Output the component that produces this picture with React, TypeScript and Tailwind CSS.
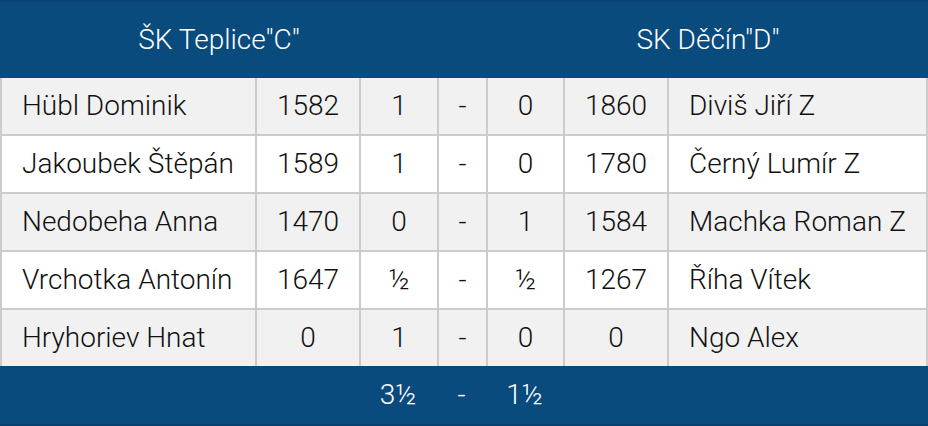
const rows = [
  { home: 'Hübl Dominik', homeElo: '1582', a: '1', b: '0', awayElo: '1860', away: 'Diviš Jiří Z' },
  { home: 'Jakoubek Štěpán', homeElo: '1589', a: '1', b: '0', awayElo: '1780', away: 'Černý Lumír Z' },
  { home: 'Nedobeha Anna', homeElo: '1470', a: '0', b: '1', awayElo: '1584', away: 'Machka Roman Z' },
  { home: 'Vrchotka Antonín', homeElo: '1647', a: '½', b: '½', awayElo: '1267', away: 'Říha Vítek' },
  { home: 'Hryhoriev Hnat', homeElo: '0', a: '1', b: '0', awayElo: '0', away: 'Ngo Alex' },
]

export default function App() {
  const cell = 'flex h-[56px] items-center justify-center'
  return (
    <div className="w-[928px] font-['Roboto',sans-serif] text-[28px] font-light text-[#111]">
      <div className="flex h-[78px] items-center border-t-2 border-[#074071] bg-[#0a4b7e] text-white">
        <div className="w-[438px] text-center">ŠK Teplice"C"</div>
        <div className="w-[50px]" />
        <div className="flex-1 text-center">SK Děčín"D"</div>
      </div>

      <div className="grid grid-cols-[253px_102px_76px_47px_75px_102px_257px] gap-[2px] bg-[#cccccc] px-[2px]">
        {rows.map((r, i) => {
          const bg = i % 2 === 0 ? 'bg-[#f1f1f1]' : 'bg-white'
          return [
            <div key={`${i}-1`} className={`${cell} ${bg} justify-start pl-5`}>{r.home}</div>,
            <div key={`${i}-2`} className={`${cell} ${bg}`}>{r.homeElo}</div>,
            <div key={`${i}-3`} className={`${cell} ${bg}`}>{r.a}</div>,
            <div key={`${i}-4`} className={`${cell} ${bg}`}>-</div>,
            <div key={`${i}-5`} className={`${cell} ${bg}`}>{r.b}</div>,
            <div key={`${i}-6`} className={`${cell} ${bg}`}>{r.awayElo}</div>,
            <div key={`${i}-7`} className={`${cell} ${bg} justify-start pl-5`}>{r.away}</div>,
          ]
        })}
      </div>

      <div className="flex h-[60px] items-center border-b-2 border-[#074071] bg-[#0a4b7e] text-white">
        <div className="w-[359px]" />
        <div className="w-[78px] text-center">3½</div>
        <div className="w-[49px] text-center">-</div>
        <div className="w-[77px] text-center">1½</div>
        <div className="flex-1" />
      </div>
    </div>
  )
}
